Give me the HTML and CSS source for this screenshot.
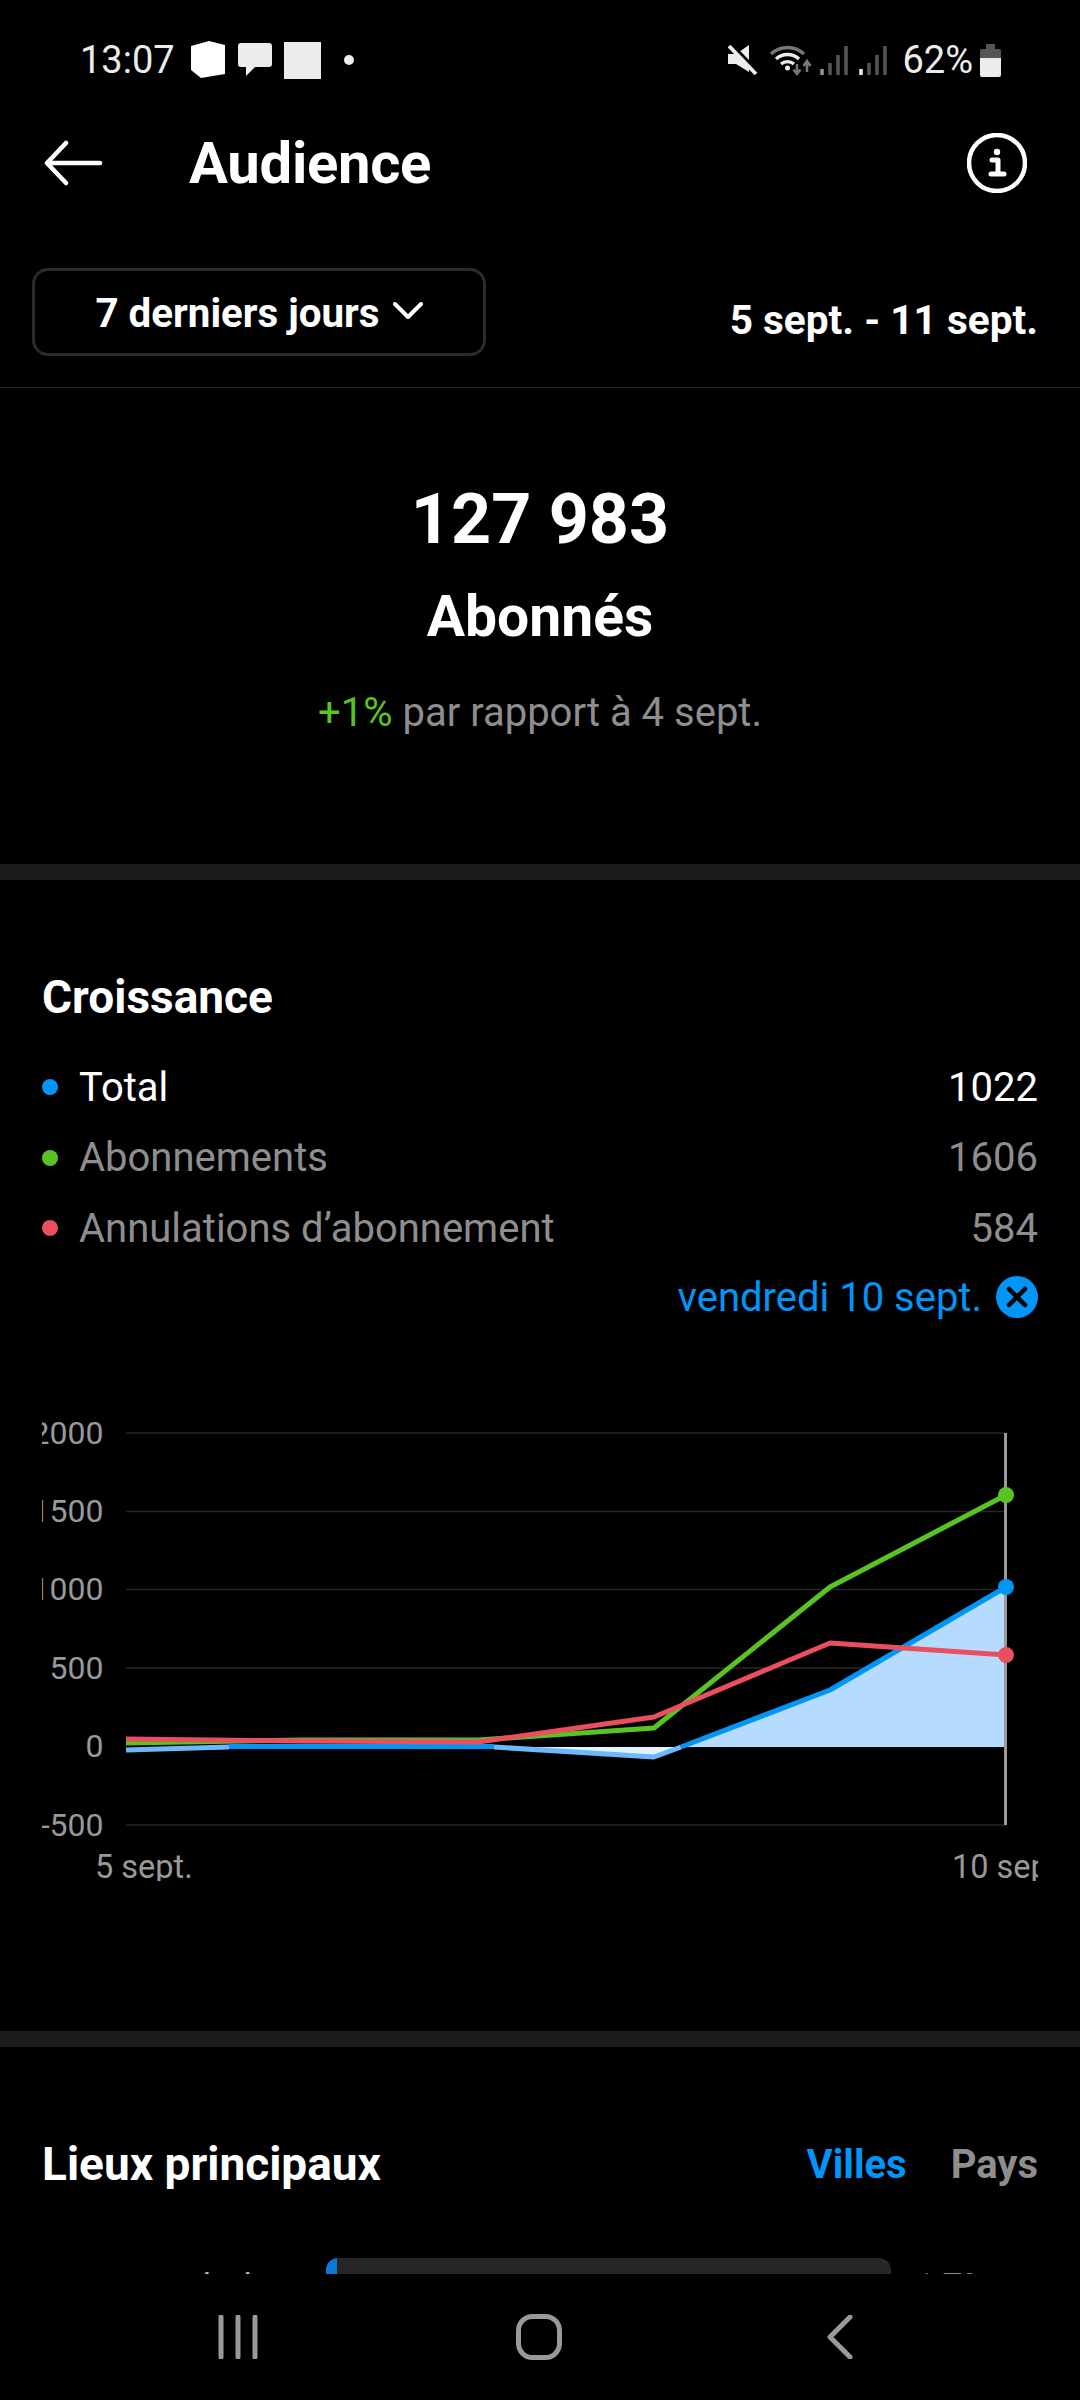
FILE: index.html
```html
<!DOCTYPE html>
<html lang="fr">
  <head>
    <meta charset="UTF-8" />
    <meta name="viewport" content="width=device-width, initial-scale=1.0" />
    <title>Audience</title>
    <link rel="stylesheet" href="styles.css">
  </head>
  <body>
    <div class="screen">
      <main class="content">
        <!-- status bar -->
        <div class="status">
          <span class="status-time">13:07</span>
          <svg class="ic-cube" width="36" height="38" viewBox="0 0 36 38"><path d="M1 5 L19 0 L35 4 L35 33 L11 37 L1 29 Z" fill="#fff"/></svg>
          <svg class="ic-bubble" width="34" height="34" viewBox="0 0 34 34"><path d="M3 0 H31 Q34 0 34 3 V21 Q34 24 31 24 H17 L8 33 V24 H3 Q0 24 0 21 V3 Q0 0 3 0 Z" fill="#ececec"/></svg>
          <span class="ic-square"></span>
          <span class="ic-dot"></span>
          <span class="status-gap"></span>
          <svg class="ic-mute" width="30" height="30" viewBox="0 0 30 30"><path d="M0 9 H8 L21 0 V27 L8 19 H0 Z" fill="#ececec"/><path d="M3 0 L30 28" stroke="#000" stroke-width="5"/><path d="M1 1 L28 29" stroke="#ececec" stroke-width="3.800"/></svg>
          <svg class="ic-wifi" width="42" height="32" viewBox="0 0 42 32">
            <g fill="none" stroke-width="3.400">
              <path d="M1 10 A24 24 0 0 1 34 10" stroke="#777"/>
              <path d="M6 15 A17 17 0 0 1 29 15" stroke="#ececec"/>
              <path d="M11 20 A10 10 0 0 1 24 20" stroke="#ececec"/>
            </g>
            <circle cx="17.500" cy="24" r="2.500" fill="#ececec"/>
            <path d="M27 20 V29 M23.500 25.500 L27 30 L30.500 25.500" stroke="#777" stroke-width="2.500" fill="none"/>
            <path d="M37 28 V18 M33.500 22 L37 17 L40.500 22" stroke="#777" stroke-width="2.500" fill="none"/>
          </svg>
          <svg class="ic-signal" width="28" height="30" viewBox="0 0 28 30"><path d="M2 24 V30" stroke="#999" stroke-width="3.500"/><path d="M10 18 V30 M18 10 V30 M26 1 V30" stroke="#555" stroke-width="3.500"/></svg>
          <svg class="ic-signal" width="28" height="30" viewBox="0 0 28 30"><path d="M2 24 V30" stroke="#eee" stroke-width="3.500"/><path d="M10 18 V30 M18 10 V30 M26 1 V30" stroke="#555" stroke-width="3.500"/></svg>
          <span class="status-pct">62%</span>
          <svg class="ic-battery" width="21" height="33" viewBox="0 0 21 33"><path d="M6 0 H15 V5 H19 Q21 5 21 7 V14 H0 V7 Q0 5 2 5 H6 Z" fill="#555"/><path d="M0 14 H21 V31 Q21 33 19 33 H2 Q0 33 0 31 Z" fill="#ececec"/></svg>
        </div>

        <!-- header -->
        <header class="topbar">
          <svg class="back" width="60" height="46" viewBox="0 0 60 46"><path d="M3 23 H56 M22 3 L3 23 L22 43" fill="none" stroke="#fff" stroke-width="4.500" stroke-linecap="round" stroke-linejoin="round"/></svg>
          <h1 class="title">Audience</h1>
          <svg class="info" width="60" height="60" viewBox="0 0 60 60">
            <circle cx="30" cy="30" r="28" fill="none" stroke="#fff" stroke-width="4.500"/>
            <circle cx="30" cy="19" r="3.200" fill="#fff"/>
            <path d="M25 27 H31 V41 M24 41 H37" fill="none" stroke="#fff" stroke-width="5" stroke-linecap="round" stroke-linejoin="round"/>
          </svg>
        </header>

        <!-- period -->
        <div class="period">
          <div class="period-btn">
            <span class="period-text">7 derniers jours</span>
            <svg class="chev" width="30" height="17" viewBox="0 0 30 17"><path d="M2 2 L15 15 L28 2" fill="none" stroke="#fff" stroke-width="4" stroke-linecap="round" stroke-linejoin="round"/></svg>
          </div>
          <div class="period-range">5 sept. - 11 sept.</div>
        </div>

        <!-- summary -->
        <section class="summary">
          <div class="summary-num">127 983</div>
          <div class="summary-label">Abonnés</div>
          <div class="summary-diff"><span class="up">+1%</span> par rapport à 4 sept.</div>
        </section>
        <div class="band"></div>

        <!-- growth -->
        <section class="growth">
          <h2 class="section-title">Croissance</h2>
          <div class="legend">
            <div class="legend-row active"><i class="dot blue"></i><span>Total</span><b>1022</b></div>
            <div class="legend-row"><i class="dot green"></i><span>Abonnements</span><b>1606</b></div>
            <div class="legend-row"><i class="dot red"></i><span>Annulations d’abonnement</span><b>584</b></div>
          </div>
          <div class="picked">
            <span>vendredi 10 sept.</span>
            <svg width="42" height="42" viewBox="0 0 42 42"><circle cx="21" cy="21" r="21" fill="#0095f6"/><path d="M13 13 L29 29 M29 13 L13 29" stroke="#000" stroke-width="4.500" stroke-linecap="round"/></svg>
          </div>
          <svg class="chart" width="996" height="481" viewBox="42 1400 996 481">
            <g class="grid">
              <path d="M126 1433 H1005 M126 1511.500 H1005 M126 1589.500 H1005 M126 1668 H1005 M126 1825 H1005"/>
            </g>
            <g class="axis">
              <text x="103.500" y="1443.500">2000</text>
              <text x="103.500" y="1521.500">1500</text>
              <text x="103.500" y="1599.500">1000</text>
              <text x="103.500" y="1678.500">500</text>
              <text x="103.500" y="1756.500">0</text>
              <text x="103.500" y="1835.500">-500</text>
            </g>
            <text class="tick" x="95" y="1878">5 sept.</text>
            <text class="tick" x="952" y="1878">10 sept.</text>
            <path d="M681 1747 L830 1690 L1006 1587 V1747 Z" fill="#b5dcff"/>
            <path d="M494 1747 L654 1757 L681 1747 Z" fill="#e3f4ff"/>
            <path d="M1005.500 1433 V1825" stroke="#999" stroke-width="3"/>
            <g class="line">
              <polyline points="126,1750 229,1747" stroke="#6cb8fb"/>
              <polyline points="229,1746.500 494,1746.500" stroke="#0095f6"/>
              <polyline points="494,1747 654,1757 681,1747" stroke="#6cb8fb"/>
              <polyline points="681,1747 830,1690 1006,1587" stroke="#0095f6"/>
              <polyline points="126,1743 302,1740 478,1740 654,1728 830,1587 1006,1495" stroke="#58c322"/>
              <polyline points="126,1739 302,1741 478,1742 654,1717 830,1643 1006,1655" stroke="#e94f5f"/>
            </g>
            <circle cx="1006" cy="1495" r="8" fill="#58c322"/>
            <circle cx="1006" cy="1587" r="8" fill="#0095f6"/>
            <circle cx="1006" cy="1655" r="8" fill="#e94f5f"/>
          </svg>
        </section>
        <div class="band"></div>

        <!-- places -->
        <section class="places">
          <div class="places-head">
            <h2 class="section-title">Lieux principaux</h2>
            <div class="tabs"><span class="tab on">Villes</span><span class="tab">Pays</span></div>
          </div>
          <div class="place">
            <span class="place-name">Abidjan</span>
            <div class="place-bar"><div class="place-fill"></div></div>
            <span class="place-pct">1,7%</span>
          </div>
        </section>
      </main>

      <!-- android nav -->
      <nav class="navbar">
        <div class="nav-cell"><svg width="40" height="44" viewBox="0 0 40 44"><path d="M3 2 V42 M20 2 V42 M37 2 V42" stroke="#999" stroke-width="5" stroke-linecap="round"/></svg></div>
        <div class="nav-cell"><svg width="46" height="46" viewBox="0 0 46 46"><rect x="2.500" y="2.500" width="41" height="41" rx="14" fill="none" stroke="#999" stroke-width="5"/></svg></div>
        <div class="nav-cell"><svg width="26" height="44" viewBox="0 0 26 44"><path d="M23 2 L3 22 L23 42" fill="none" stroke="#999" stroke-width="5" stroke-linecap="round" stroke-linejoin="round"/></svg></div>
      </nav>
    </div>
  </body>
</html>
```

FILE: styles.css
```css
* {
  box-sizing: border-box;
}
body {
  margin: 0;
  background: #000;
  color: #fff;
  font-family: Roboto, "Noto Sans", sans-serif;
}
h1, h2 {
  margin: 0;
}
.screen {
  width: 1080px;
  height: 2400px;
  display: flex;
  flex-direction: column;
  background: #000;
}
.content {
  flex: 1;
  overflow: hidden;
}

/* status bar */
.status {
  height: 120px;
  padding: 0 79px 0 80px;
  display: flex;
  align-items: center;
  color: #ececec;
}
.status-time {
  font-size: 38px;
  margin-right: 15px;
}
.ic-bubble {
  margin-left: 12px;
}
.ic-square {
  width: 37px;
  height: 37px;
  margin-left: 12px;
  background: #ececec;
}
.ic-dot {
  width: 10px;
  height: 10px;
  margin-left: 23px;
  border-radius: 50%;
  background: #ececec;
}
.status-gap {
  flex: 1;
}
.ic-wifi {
  margin-left: 12px;
}
.ic-signal {
  margin-left: 8px;
}
.ic-signal + .ic-signal {
  margin-left: 11px;
}
.status-pct {
  font-size: 38px;
  margin: 0 7px 0 15px;
}

/* top bar */
.topbar {
  height: 86px;
  padding: 0 53px 0 44px;
  display: flex;
  align-items: center;
}
.title {
  flex: 1;
  margin-left: 85px;
  font-size: 58px;
  font-weight: 700;
  letter-spacing: -0.300px;
}
.period {
  height: 182px;
  padding: 62px 42px 0 32px;
  display: flex;
  justify-content: space-between;
  align-items: flex-start;
  border-bottom: 1px solid #262626;
}
.period-btn {
  width: 454px;
  height: 88px;
  display: flex;
  align-items: center;
  justify-content: center;
  gap: 13px;
  border: 3px solid #2b2b2b;
  border-radius: 16px;
  font-size: 40.300px;
  font-weight: 700;
}
.period-text {
  margin-top: 2px;
}
.chev {
  margin-bottom: 4px;
}
.period-range {
  margin-top: 28px;
  font-size: 40.600px;
  font-weight: 700;
}

/* summary */
.summary {
  height: 476px;
  padding-top: 100px;
  text-align: center;
}
.summary-num {
  font-size: 70px;
  line-height: 62px;
  font-weight: 700;
}
.summary-label {
  margin-top: 37px;
  font-size: 57px;
  line-height: 60px;
  font-weight: 700;
}
.summary-diff {
  margin-top: 43px;
  font-size: 40px;
  line-height: 46px;
  color: #8e8e8e;
}
.up {
  color: #58c322;
}
.band {
  height: 16px;
  background: #1c1c1c;
}

/* growth */
.growth {
  padding: 92px 42px 0;
  height: 1151px;
}
.section-title {
  font-size: 46px;
  line-height: 50px;
  font-weight: 700;
}
.legend {
  margin-top: 30px;
}
.legend-row {
  height: 70.500px;
  display: flex;
  align-items: center;
  font-size: 40px;
  color: #8e8e8e;
}
.legend-row.active {
  color: #fff;
}
.legend-row span {
  flex: 1;
}
.legend-row b {
  font-weight: 400;
}
.dot {
  width: 16px;
  height: 16px;
  margin-right: 21px;
  border-radius: 50%;
}
.dot.blue {
  background: #0095f6;
}
.dot.green {
  background: #58c322;
}
.dot.red {
  background: #e94f5f;
}
.picked {
  height: 67px;
  display: flex;
  justify-content: flex-end;
  align-items: center;
  gap: 14px;
  font-size: 40px;
  color: #0095f6;
}
.chart {
  display: block;
  margin-top: 69px;
}
.grid path {
  fill: none;
  stroke: #262626;
  stroke-width: 1.500;
}
.axis text {
  font-size: 32px;
  fill: #999;
  text-anchor: end;
}
.tick {
  font-size: 32.500px;
  fill: #999;
}
.line polyline {
  fill: none;
  stroke-width: 5;
  stroke-linejoin: round;
}

/* places */
.places {
  padding: 92px 42px 0;
}
.places-head {
  display: flex;
  justify-content: space-between;
  align-items: center;
}
.tabs {
  display: flex;
  gap: 44px;
}
.tab {
  font-size: 40px;
  font-weight: 700;
  color: #8e8e8e;
}
.tab.on {
  color: #0095f6;
}
.place {
  margin-top: 69px;
  display: flex;
  align-items: flex-start;
}
.place-name {
  width: 258px;
  padding-top: 8px;
  font-size: 36px;
  line-height: 44px;
  text-align: right;
  color: #ccc;
}
.place-bar {
  width: 565px;
  height: 40px;
  margin-left: 26px;
  border-radius: 12px;
  background: #262626;
  overflow: hidden;
}
.place-fill {
  width: 11px;
  height: 100%;
  background: #0a78d8;
}
.place-pct {
  margin-left: 24px;
  padding-top: 7px;
  font-size: 36px;
  line-height: 44px;
  color: #8e8e8e;
}

/* bottom nav */
.navbar {
  height: 126px;
  padding-right: 3px;
  display: flex;
  justify-content: center;
  background: #000;
}
.nav-cell {
  width: 301px;
  display: flex;
  align-items: center;
  justify-content: center;
}
```
